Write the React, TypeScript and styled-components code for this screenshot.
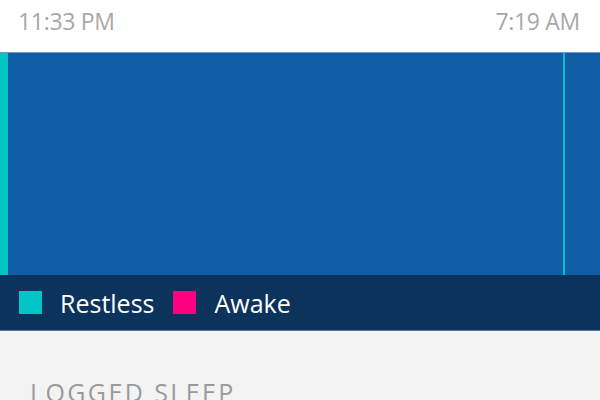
import React from "react";
import styled, { createGlobalStyle } from "styled-components";

const GlobalStyle = createGlobalStyle`
  html, body {
    margin: 0;
    padding: 0;
    background: #f3f3f3;
    font-family: "Open Sans", "Liberation Sans", sans-serif;
  }
`;

const START = 23 * 60 + 33;
const END = 24 * 60 + 7 * 60 + 19;

interface Segment {
  from: number;
  to: number;
  kind: "restless" | "awake";
}

const segments: Segment[] = [
  { from: START, to: START + 6.5, kind: "restless" },
  { from: START + 437, to: START + 438.7, kind: "restless" },
];

const COLORS = {
  restless: "#00c4c6",
  awake: "#ff0080",
};

const Page = styled.div`
  width: 600px;
  height: 400px;
  overflow: hidden;
  background: #f3f3f3;
`;

const TimeBar = styled.div`
  display: flex;
  justify-content: space-between;
  align-items: center;
  height: 52px;
  padding: 0 20px 10px 18px;
  box-sizing: border-box;
  background: #ffffff;
  color: #a7a7a7;
  font-size: 23px;
  letter-spacing: -0.3px;
`;

const Chart = styled.div`
  position: relative;
  height: 223px;
  background: #105ca5;
  border-top: 1px solid #6d9acb;
  box-sizing: border-box;
`;

const Bar = styled.div<{ $kind: "restless" | "awake" }>`
  position: absolute;
  top: 0;
  bottom: 0;
  background: ${({ $kind }) => COLORS[$kind]};
`;

const Legend = styled.div`
  display: flex;
  align-items: center;
  gap: 19px;
  height: 56px;
  padding-left: 19px;
  background: #0b335c;
  border-bottom: 1px solid #5b7796;
  box-sizing: border-box;
`;

const LegendItem = styled.div`
  display: flex;
  align-items: center;
  gap: 18px;
  color: #ffffff;
  font-size: 25px;
`;

const Swatch = styled.span<{ $color: string }>`
  width: 23px;
  height: 23px;
  background: ${({ $color }) => $color};
`;

const Section = styled.div`
  padding: 45px 0 0 30px;
`;

const SectionTitle = styled.div`
  color: #9a9a9a;
  font-size: 25px;
  letter-spacing: 2.4px;
  line-height: 32px;
`;

function pct(v: number) {
  return ((v - START) / (END - START)) * 100;
}

export default function App() {
  return (
    <Page>
      <GlobalStyle />
      <TimeBar>
        <span>11:33 PM</span>
        <span>7:19 AM</span>
      </TimeBar>
      <Chart>
        {segments.map((s, i) => (
          <Bar
            key={i}
            $kind={s.kind}
            style={{ left: `${pct(s.from)}%`, width: `${pct(s.to) - pct(s.from)}%` }}
          />
        ))}
      </Chart>
      <Legend>
        <LegendItem>
          <Swatch $color={COLORS.restless} />
          Restless
        </LegendItem>
        <LegendItem>
          <Swatch $color={COLORS.awake} />
          Awake
        </LegendItem>
      </Legend>
      <Section>
        <SectionTitle>LOGGED SLEEP</SectionTitle>
      </Section>
    </Page>
  );
}
